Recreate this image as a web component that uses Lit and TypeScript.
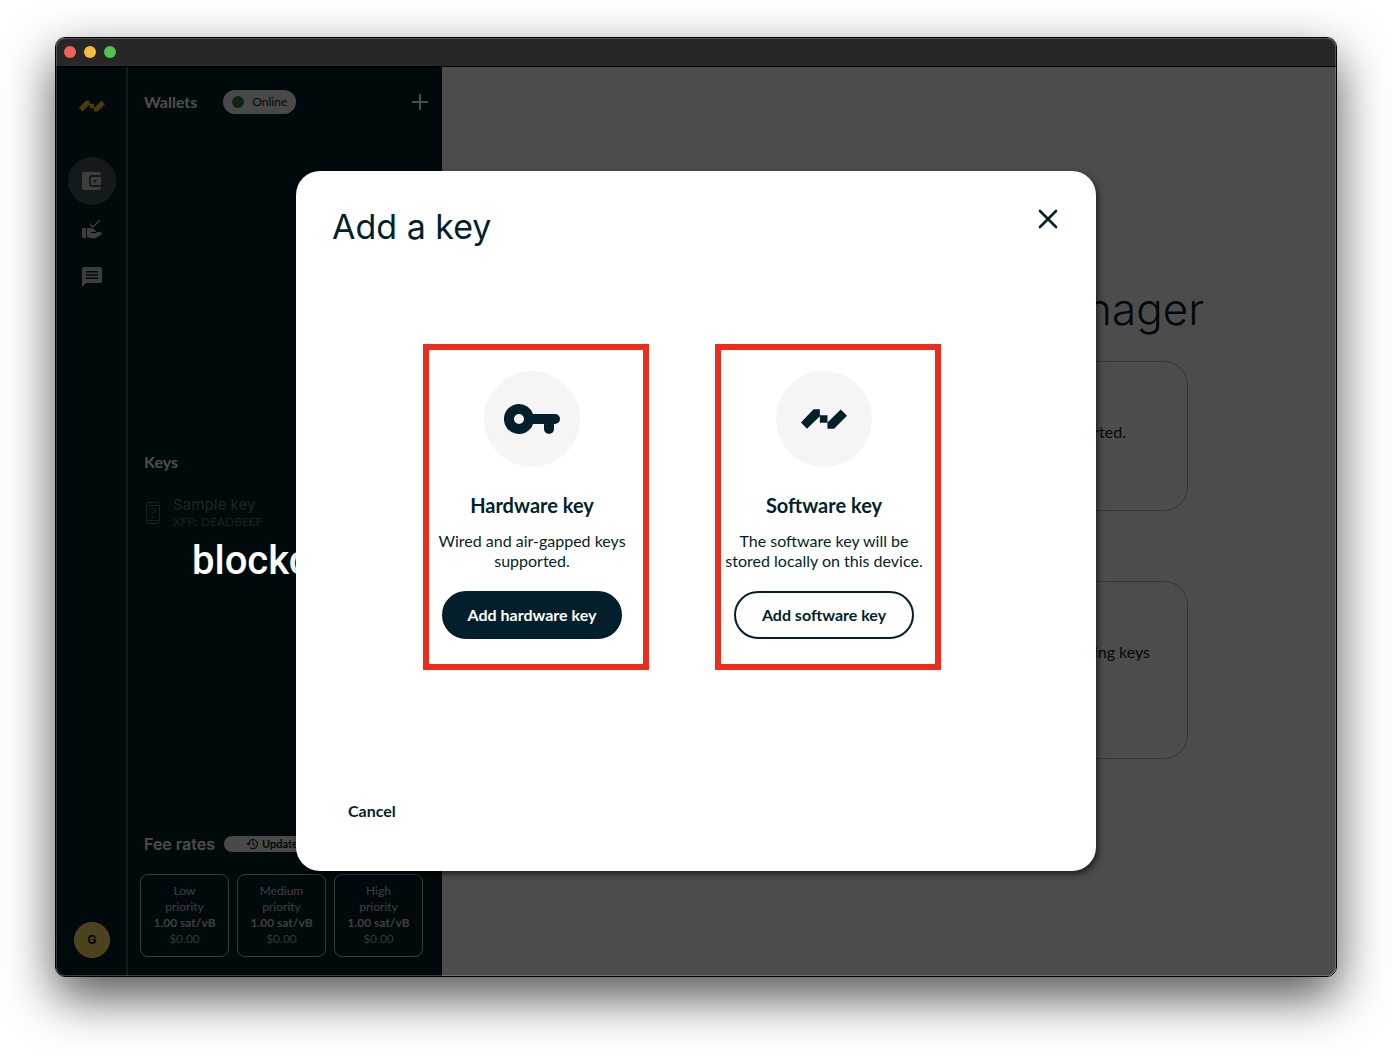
import { LitElement, html, css, svg } from "lit";
import { customElement, property } from "lit/decorators.js";

const logoShape = svg`
  <path d="M0 40 38 0h19v18h23v22L120 1l19 19-39 39H80V41H57V21L18 59z"/>`;

const icons = {
  wallet: svg`<path d="M2 0h15a2 2 0 0 1 2 2v1h-9a3 3 0 0 0-3 3v6a3 3 0 0 0 3 3h9v1a2 2 0 0 1-2 2H2a2 2 0 0 1-2-2V2a2 2 0 0 1 2-2z"/>
    <path fill-rule="evenodd" d="M10 5h9v8h-9a1 1 0 0 1-1-1V6a1 1 0 0 1 1-1zm3 2.500a1.500 1.500 0 1 0 0 3 1.500 1.500 0 0 0 0-3z"/>`,
  approve: svg`<path d="M8 4l3 3 7-7" fill="none" stroke="currentColor" stroke-width="1.400"/>
    <path d="M1 8h3v10H1a1 1 0 0 1-1-1V9a1 1 0 0 1 1-1zM5 8h3c3 0 6 2 6 4H9v1h4.500l2-1H18c1 0 2 1 2 2l-6 4c-3 1-5 0-9-1z"/>`,
  chat: svg`<path fill-rule="evenodd" d="M2 0h16a2 2 0 0 1 2 2v12a2 2 0 0 1-2 2H4l-4 4V2a2 2 0 0 1 2-2zM4 4v1.600h12V4zM4 7.200v1.600h12V7.200zM4 10.400V12h12v-1.600z"/>`,
  history: svg`<path d="M2.500 6.500a4.500 4.500 0 1 1 1.500 3M.8 5l1.700 1.800L4.400 5M7 3.500V6.500l2 1.200" fill="none" stroke="currentColor" stroke-width="1.100"/>`,
};

@customElement("fee-card")
export class FeeCard extends LitElement {
  @property() level = "";
  @property() rate = "";
  @property() price = "";

  static styles = css`
    :host {
      display: block;
      flex: 1;
      box-sizing: border-box;
      padding: 8px 10px 9px;
      border: 1px solid #bfc7ca;
      border-radius: 8px;
      text-align: center;
      font: 12px/16px Lato, sans-serif;
      color: #cfd2d3;
    }
    .rate { font-weight: 700; white-space: nowrap; }
    .price { color: #84c79f; }
  `;

  render() {
    return html`
      <div>${this.level}<br />priority</div>
      <div class="rate">${this.rate}</div>
      <div class="price">${this.price}</div>
    `;
  }
}

@customElement("key-option")
export class KeyOption extends LitElement {
  @property() heading = "";
  @property() description = "";
  @property() action = "";
  @property({ type: Boolean }) primary = false;

  static styles = css`
    :host {
      box-sizing: border-box;
      flex: 0 1 226px;
      display: flex;
      flex-direction: column;
      align-items: center;
      padding: 21px 8px 25px 0;
      border: 6px solid #ee2c1d;
      text-align: center;
      font-family: Lato, sans-serif;
      color: #031f2b;
    }
    .disc {
      display: grid;
      place-items: center;
      width: 96px;
      height: 96px;
      border-radius: 50%;
      background: #f5f5f5;
    }
    h2 { margin: 24px 0 12px; font-size: 20px; line-height: 28px; font-weight: 700; }
    p { margin: 0 0 20px; font-size: 16px; line-height: 20px; }
    button {
      width: 180px;
      height: 48px;
      border: 2px solid #031f2b;
      border-radius: 24px;
      background: #fff;
      color: #031f2b;
      padding: 0;
      font: 700 16px/20px Lato, sans-serif;
    }
    .primary { background: #031f2b; color: #fff; }
  `;

  render() {
    return html`
      <div class="disc"><slot></slot></div>
      <h2>${this.heading}</h2>
      <p>${this.description}</p>
      <button class=${this.primary ? "primary" : ""}>${this.action}</button>
    `;
  }
}

@customElement("app-root")
export class AppRoot extends LitElement {
  static styles = css`
    :host {
      display: flex;
      box-sizing: border-box;
      min-height: 100vh;
      padding: 37px 55px 73px;
      background: #fff;
      font-family: Lato, sans-serif;
      color: #031f2b;
    }
    * { box-sizing: border-box; }
    h1, h2, h3, p { margin: 0; }
    button { font-family: inherit; padding: 0; border: 0; background: none; color: inherit; }
    svg { display: block; fill: currentColor; }

    .window {
      flex: 1;
      display: flex;
      flex-direction: column;
      position: relative;
      border: 1px solid #000;
      border-radius: 10px;
      overflow: hidden;
      background: #fff;
    }
    .shadow {
      flex: 1;
      display: flex;
      border-radius: 10px;
      box-shadow: 0 20px 50px rgba(0, 0, 0, 0.68);
    }
    .window::after {
      content: "";
      position: absolute;
      inset: 0;
      border-radius: 9px;
      box-shadow: inset 0 0 0 1px rgba(255, 255, 255, 0.2);
      pointer-events: none;
    }
    .titlebar {
      display: flex;
      align-items: center;
      gap: 8px;
      height: 29px;
      padding-left: 8px;
      background: #272727;
      border-bottom: 1px solid #000;
    }
    .light { width: 12px; height: 12px; border-radius: 50%; }
    .close-light { background: #f5605a; }
    .min-light { background: #f8bb42; }
    .max-light { background: #4fc451; }

    .body { flex: 1; display: flex; position: relative; }
    .rail {
      width: 72px;
      display: flex;
      flex-direction: column;
      align-items: center;
      padding: 33px 10px 18px 12px;
      background: #031f2b;
      color: #c8cbcc;
      border-right: 2px solid #45565e;
    }
    .brand { height: 12px; margin-bottom: 45px; color: #ffc61c; }
    .nav { display: flex; flex-direction: column; }
    .nav button { display: grid; place-items: center; width: 48px; height: 48px; border-radius: 50%; }
    .nav .active { background: #45565e; }
    .avatar {
      width: 36px;
      height: 36px;
      margin-top: auto;
      border-radius: 50%;
      background: #fddc5c;
      color: #000;
      border: 1px solid #fff0a0;
      font: 700 12px/34px Inter, sans-serif;
      text-align: center;
    }

    .panel {
      width: 314px;
      display: flex;
      flex-direction: column;
      padding: 23px 19px 19px 12px;
      background: #031f2b;
      color: #fff;
    }
    .row { display: flex; align-items: center; padding-left: 4px; }
    .row h3 { font-size: 16px; line-height: 24px; font-weight: 700; }
    .pill {
      display: flex;
      align-items: center;
      height: 24px;
      margin-left: 26px;
      padding: 0 9px;
      gap: 8px;
      border-radius: 12px;
      background: #f5f5f5;
      color: #031f2b;
      font-size: 12px;
      line-height: 16px;
    }
    .dot { width: 12px; height: 12px; border-radius: 50%; background: #2e7d4f; }
    .add { margin-left: auto; margin-right: -6px; }
    .wallets { flex: 1 0 336px; }
    .keys { flex: 1 0 358px; }
    .key { display: flex; align-items: center; gap: 12px; padding: 22px 0 0 5px; color: #5b6b72; }
    .key-name { font: 500 15px/18px Inter, sans-serif; }
    .key-id { font-size: 12px; line-height: 16px; }
    .phone { fill: none; stroke: currentColor; }
    .phone text { fill: currentColor; stroke: none; font: 14px Lato, sans-serif; }
    .update {
      display: flex;
      align-items: center;
      gap: 4px;
      height: 16px;
      margin-left: 9px;
      padding: 0 22px;
      border-radius: 8px;
      background: #f5f5f5;
      color: #031f2b;
      font-size: 11px;
      line-height: 16px;
      font-weight: 700;
    }
    .row .fee-title { font-family: Inter, sans-serif; font-weight: 600; }
    .fees { display: flex; gap: 8px; margin-top: 18px; }

    .main {
      flex: 1;
      display: flex;
      flex-direction: column;
      align-items: center;
      padding: 212px 32px 0;
    }
    .main h1 {
      width: 630px;
      max-width: 100%;
      font: 300 44px/60px Inter, sans-serif;
      text-align: right;
    }
    .welcome {
      width: 598px;
      max-width: 100%;
      margin-top: 22px;
      padding: 60px 61px 68px;
      border: 1px solid #b0b4b6;
      border-radius: 24px;
      font-size: 16px;
      line-height: 20px;
      text-align: right;
    }
    .welcome + .welcome { margin-top: 70px; padding: 60px 37px 96px; }

    .backdrop { position: absolute; inset: 0; background: rgba(0, 0, 0, 0.7); }
    .watermark {
      position: absolute;
      left: 136px;
      top: 468px;
      color: #fff;
      font: 500 40px/52px Roboto, sans-serif;
    }
    .overlay {
      position: absolute;
      inset: 0;
      display: flex;
      align-items: center;
      justify-content: center;
      padding: 24px 24px 25px;
    }
    dialog {
      position: static;
      display: flex;
      flex-direction: column;
      width: 800px;
      max-width: 100%;
      min-height: 700px;
      margin: 0;
      padding: 36px;
      border: 0;
      border-radius: 24px;
      background: #fff;
      color: #031f2b;
      box-shadow: 2px 3px 6px rgba(0, 0, 0, 0.6);
    }
    .head { display: flex; align-items: flex-start; justify-content: space-between; }
    .head h1 { font: 400 34px/40px Inter, sans-serif; }
    .options {
      display: flex;
      align-items: flex-start;
      justify-content: center;
      gap: 66px;
      padding: 97px 28px 0 0;
    }
    .cancel {
      align-self: flex-start;
      height: 48px;
      margin-top: auto;
      padding: 0 16px;
      font-size: 16px;
      line-height: 20px;
      font-weight: 700;
    }
  `;

  private fees = [
    { level: "Low", rate: "1.00 sat/vB", price: "$0.00" },
    { level: "Medium", rate: "1.00 sat/vB", price: "$0.00" },
    { level: "High", rate: "1.00 sat/vB", price: "$0.00" },
  ];

  private renderRail() {
    return html`
      <nav class="rail">
        <svg class="brand" width="26" height="12" viewBox="0 0 139 59">${logoShape}</svg>
        <div class="nav">
          <button class="active" aria-label="Wallets">
            <svg width="20" height="18" viewBox="0 0 20 18">${icons.wallet}</svg>
          </button>
          <button aria-label="Approvals">
            <svg width="21" height="19" viewBox="0 0 21 19">${icons.approve}</svg>
          </button>
          <button aria-label="Messages">
            <svg width="20" height="20" viewBox="0 0 20 20">${icons.chat}</svg>
          </button>
        </div>
        <div class="avatar">G</div>
      </nav>
    `;
  }

  private renderPanel() {
    return html`
      <aside class="panel">
        <section class="wallets">
          <div class="row">
            <h3>Wallets</h3>
            <span class="pill"><span class="dot"></span>Online</span>
            <button class="add" aria-label="Add wallet">
              <svg width="18" height="18" viewBox="0 0 18 18">
                <path d="M8 1h2v7h7v2h-7v7H8v-7H1V8h7z" />
              </svg>
            </button>
          </div>
        </section>
        <section class="keys">
          <div class="row"><h3>Keys</h3></div>
          <div class="key">
            <svg class="phone" width="16" height="24" viewBox="0 0 16 24">
              <rect x="1.500" y="1.500" width="13" height="21" rx="2" />
              <path d="M1.500 4.500h13M1.500 19.500h13" />
              <text x="8" y="17" text-anchor="middle">?</text>
            </svg>
            <div>
              <div class="key-name">Sample key</div>
              <div class="key-id">XFP: DEADBEEF</div>
            </div>
          </div>
        </section>
        <section>
          <div class="row">
            <h3 class="fee-title">Fee rates</h3>
            <button class="update">
              <svg width="12" height="12" viewBox="0 0 12 12">${icons.history}</svg>Update
            </button>
          </div>
          <div class="fees">
            ${this.fees.map(
              (f) => html`<fee-card .level=${f.level} .rate=${f.rate} .price=${f.price}></fee-card>`
            )}
          </div>
        </section>
      </aside>
    `;
  }

  private renderDialog() {
    return html`
      <dialog open aria-labelledby="dialog-title">
        <div class="head">
          <h1 id="dialog-title">Add a key</h1>
          <button aria-label="Close">
            <svg width="24" height="24" viewBox="0 0 24 24">
              <path d="M4 4l16 16M20 4L4 20" fill="none" stroke="currentColor" stroke-width="2.600" stroke-linecap="round" />
            </svg>
          </button>
        </div>
        <div class="options">
          <key-option primary heading="Hardware key" description="Wired and air-gapped keys supported." action="Add hardware key">
            <svg width="56" height="30" viewBox="0 0 56 30">
              <path fill-rule="evenodd" d="M15 0a15 15 0 0 1 14.100 10H51a5 5 0 0 1 0 10h-1v5a5 5 0 0 1-10 0v-5H29.100A15 15 0 1 1 15 0zm0 10a5 5 0 1 0 0 10 5 5 0 0 0 0-10z" />
            </svg>
          </key-option>
          <key-option heading="Software key" description="The software key will be stored locally on this device." action="Add software key">
            <svg width="46" height="20" viewBox="0 0 139 59">${logoShape}</svg>
          </key-option>
        </div>
        <button class="cancel">Cancel</button>
      </dialog>
    `;
  }

  render() {
    return html`
      <div class="shadow">
        <div class="window">
          <header class="titlebar">
            <span class="light close-light"></span>
            <span class="light min-light"></span>
            <span class="light max-light"></span>
          </header>
          <div class="body">
            ${this.renderRail()} ${this.renderPanel()}
            <main class="main">
              <h1>Multisig wallet manager</h1>
              <section class="welcome"><p>Add your first wallet to get started.</p></section>
              <section class="welcome"><p>Set up a wallet from existing keys</p></section>
            </main>
            <div class="backdrop"></div>
            <div class="watermark">blockdyor</div>
            <div class="overlay">${this.renderDialog()}</div>
          </div>
        </div>
      </div>
    `;
  }
}
